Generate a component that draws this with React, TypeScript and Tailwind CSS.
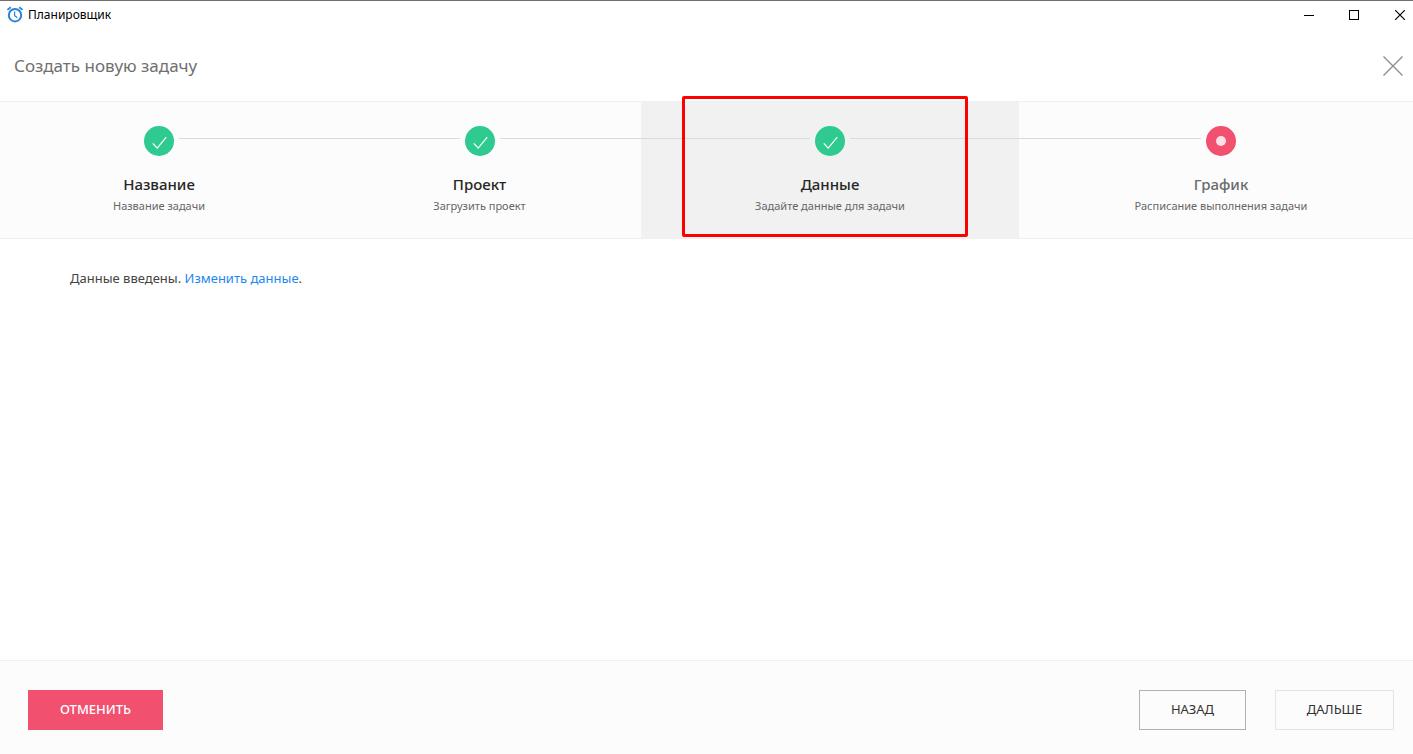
type Step = {
  title: string;
  hint: string;
  done: boolean;
  active?: boolean;
};

const steps: Step[] = [
  { title: "Название", hint: "Название задачи", done: true },
  { title: "Проект", hint: "Загрузить проект", done: true },
  { title: "Данные", hint: "Задайте данные для задачи", done: true, active: true },
  { title: "График", hint: "Расписание выполнения задачи", done: false },
];

const AlarmIcon = () => (
  <svg
    width="18"
    height="18"
    viewBox="0 0 18 18"
    fill="none"
    stroke="#2a82da"
    strokeWidth="2"
    aria-hidden="true"
  >
    <circle cx="9" cy="9.2" r="6.2" />
    <path d="M8.6 5.5v4.2l2.8 2.1" strokeWidth="1.2" />
    <path d="M1.4 3.9 4.8 1.2M16.6 3.9 13.2 1.2" strokeWidth="1.8" />
  </svg>
);

const TitleBar = () => (
  <div className="flex h-[30px] items-center border-t border-[#6f6f6f] pb-px pl-1.5">
    <AlarmIcon />
    <span className="ml-1 text-xs text-black">Планировщик</span>
    <div className="ml-auto flex h-full gap-[21px]">
      <button type="button" aria-label="Свернуть" className="flex w-6 items-center justify-center">
        <svg width="10" height="10" shapeRendering="crispEdges">
          <path d="M0 5.5h10" stroke="#000" />
        </svg>
      </button>
      <button type="button" aria-label="Развернуть" className="flex w-6 items-center justify-center">
        <svg width="10" height="10" shapeRendering="crispEdges">
          <rect x="0.5" y="0.5" width="9" height="9" fill="none" stroke="#000" />
        </svg>
      </button>
      <button
        type="button"
        aria-label="Закрыть окно"
        className="flex w-[26px] items-center justify-center"
      >
        <svg width="10" height="10">
          <path d="M0 0l10 10M10 0L0 10" stroke="#000" strokeWidth="1.2" />
        </svg>
      </button>
    </div>
  </div>
);

const StepMark = ({ done }: { done: boolean }) =>
  done ? (
    <span className="flex size-[30px] shrink-0 items-center justify-center rounded-full bg-[#2fca8f]">
      <svg width="30" height="30" fill="none" stroke="#fff" strokeWidth="1.2">
        <path d="M8.8 17.3l4.4 4.9L22.3 11.2" />
      </svg>
    </span>
  ) : (
    <span className="flex size-[30px] shrink-0 items-center justify-center rounded-full bg-[#f1506f]">
      <span className="size-2.5 rounded-full bg-[#fddfe5]" />
    </span>
  );

const Stepper = () => (
  <nav aria-label="Шаги" className="border-y border-[#f0f0f0] bg-[#fcfcfc]">
    {/* the last step runs a little past the window edge */}
    <div className="overflow-x-clip">
      <ol className="-mr-[10px] grid grid-cols-[318fr_323fr_378fr_404fr]">
        {steps.map((step, i) => (
          <li
            key={step.title}
            aria-current={step.active ? "step" : undefined}
            className={
              step.active
                ? "relative h-[136px] bg-[#f1f1f1] pt-6 text-center"
                : "h-[136px] pt-6 text-center"
            }
          >
            <div className="flex items-start gap-[5px]">
              <span className={i > 0 ? "mt-3 h-px flex-1 bg-[#dadcdb]" : "flex-1"} />
              <StepMark done={step.done} />
              <span
                className={i < steps.length - 1 ? "mt-3 h-px flex-1 bg-[#dadcdb]" : "flex-1"}
              />
            </div>
            <p
              className={
                step.done
                  ? "mt-[18px] text-[15px] leading-5 font-medium text-[#262626]"
                  : "mt-[18px] text-[15px] leading-5 font-medium text-[#6a6a6a]"
              }
            >
              {step.title}
            </p>
            <p className="mt-0.5 text-[11px] leading-5 text-[#666]">{step.hint}</p>
            {step.active && (
              <span className="absolute -top-[6px] bottom-[1px] left-[41px] right-[51px] rounded-[2px] border-3 border-[#ff0000]" />
            )}
          </li>
        ))}
      </ol>
    </div>
  </nav>
);

const App = () => {
  return (
    <div className="flex min-h-screen flex-col bg-white font-['Noto_Sans','Open_Sans',sans-serif]">
      <TitleBar />
      <header className="flex h-[71px] items-center justify-between pr-2.5 pl-3.5">
        <h1 className="text-[17px] text-[#707070]">Создать новую задачу</h1>
        <button type="button" aria-label="Закрыть">
          <svg width="20" height="20">
            <path d="M0.5 0.5l19 19M19.5 0.5l-19 19" stroke="#8c8c8c" strokeWidth="1.3" />
          </svg>
        </button>
      </header>
      <Stepper />
      <main className="flex-1 px-[70px] pt-[29px]">
        <p className="text-[13px] leading-5 text-[#444]">
          Данные введены.{" "}
          <a href="#data" className="text-[#1e87f0]">
            Изменить данные
          </a>
          .
        </p>
      </main>
      <footer className="flex h-[94px] items-center border-t border-[#f0f0f0] bg-[#fcfcfc] pt-1 pr-[19px] pl-7 text-[13px]">
        <button type="button" className="h-10 w-[135px] bg-[#f1506f] font-medium text-white">
          ОТМЕНИТЬ
        </button>
        <button
          type="button"
          className="ml-auto h-10 w-[107px] border border-[#b2b2b2] text-[#333]"
        >
          НАЗАД
        </button>
        <button
          type="button"
          className="ml-[29px] h-10 w-[119px] border border-[#e5e5e5] text-[#333]"
        >
          ДАЛЬШЕ
        </button>
      </footer>
    </div>
  );
};

export default App;
